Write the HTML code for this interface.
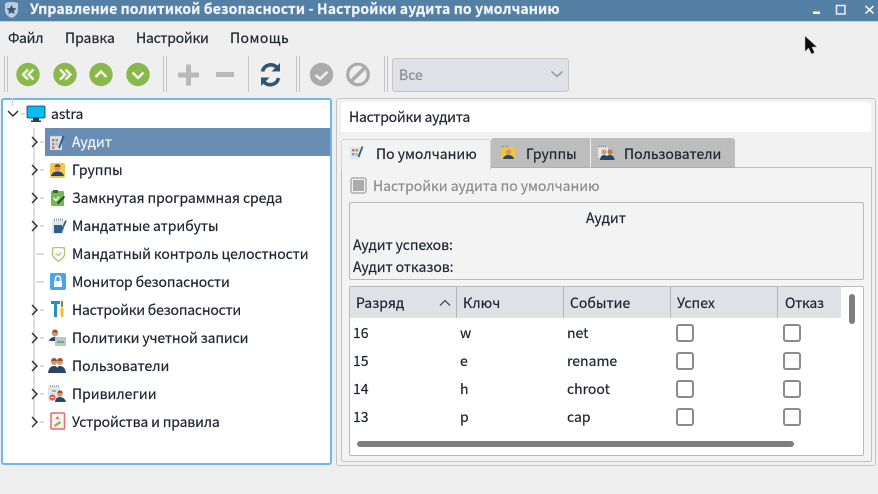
<!DOCTYPE html>
<html lang="ru"><head><meta charset="utf-8"><style>
html,body{margin:0;padding:0}
body{width:878px;height:494px;position:relative;overflow:hidden;background:#efefef;font-family:"Noto Sans CJK SC","Liberation Sans",sans-serif;font-size:14px;color:#1c2530;-webkit-text-stroke:.2px}
.a{position:absolute}
.t{position:absolute;white-space:nowrap;line-height:20px;height:20px}
svg{position:absolute;overflow:visible}
.sep{position:absolute;top:56px;height:36px;width:2px;border-left:1px solid #c4c4c4;border-right:1px solid #c4c4c4}
.sep1{position:absolute;top:56px;height:36px;width:1px;background:#c8c8c8}
.cb{position:absolute;width:14px;height:14px;border:2px solid #8b8b8b;border-radius:3px;background:#fff}
.hd{position:absolute;top:287px;height:31px;background:#e0e1e6;border-right:1px solid #b4b6ba}
</style></head><body>
<!-- title bar -->
<div class="a" style="left:0;top:0;width:878px;height:21px;background:#5580a5;border-bottom:1px solid #c3cfd9"></div>
<svg style="left:3px;top:1px" width="17" height="18" viewBox="0 0 17 18"><path d="M2 2Q8.500 0 15 2V10Q14 15 8.500 17Q3 15 2 10Z" fill="#b9cde0"/><path d="M8.500 4l1.500 3 3.500.5-2.500 2.300.6 3.200-3.100-1.600-3.100 1.600.6-3.200-2.500-2.300 3.500-.5z" fill="#36597c"/></svg>
<div class="t" style="left:30px;top:-1px;color:#f2f5f8;font-weight:700;font-size:14px;letter-spacing:.12px" id="title">Управление политикой безопасности - Настройки аудита по умолчанию</div>
<svg style="left:810px;top:3px" width="68" height="16" viewBox="0 0 68 16"><rect x="3" y="8.500" width="7" height="2.500" fill="#fff"/><rect x="26.500" y="2.500" width="8.500" height="8.500" fill="none" stroke="#e8eef3" stroke-width="1.500"/><path d="M55.500 3l8 7.500M63.500 3l-8 7.500" stroke="#fff" stroke-width="1.500" fill="none"/></svg>
<!-- menu -->
<div class="t" style="left:8px;top:28px;letter-spacing:-.2px">Файл</div>
<div class="t" style="left:65px;top:28px">Правка</div>
<div class="t" style="left:136px;top:28px;letter-spacing:-.25px">Настройки</div>
<div class="t" style="left:230px;top:28px;letter-spacing:.45px">Помощь</div>
<!-- toolbar -->
<div class="sep" style="left:4px"></div>
<div class="sep" style="left:163px"></div>
<div class="sep1" style="left:248px"></div>
<div class="sep" style="left:296px"></div>
<div class="sep" style="left:384px"></div>
<svg style="left:0;top:56px" width="400" height="36" viewBox="0 0 400 36">
<g fill="#8bb84d"><circle cx="28" cy="18.500" r="11.700"/><circle cx="65" cy="18.500" r="11.700"/><circle cx="101" cy="18.500" r="11.700"/><circle cx="138" cy="18.500" r="11.700"/></g>
<g fill="none" stroke="#f2f7e8" stroke-width="2.400"><path d="M28 13.500l-5 5 5 5M33.500 13.500l-5 5 5 5"/><path d="M60 13.500l5 5-5 5M65.500 13.500l5 5-5 5"/><path d="M95.500 21l5.500-5.500 5.500 5.500"/><path d="M132.500 16.500l5.500 5.500 5.500-5.500"/></g>
<path d="M178 19h21M188.500 8.500v21" stroke="#b9b9b9" stroke-width="5" fill="none"/>
<path d="M216 18.500h18" stroke="#b9b9b9" stroke-width="5" fill="none"/>
<g fill="none" stroke="#34556f" stroke-width="3.600"><path d="M262.500 15.500a8.500 8.500 0 0 1 14.500-4"/><path d="M278.500 22a8.500 8.500 0 0 1-14.500 4"/></g>
<path d="M280 7v8.500h-8.500z" fill="#34556f"/><path d="M261 30v-8.500h8.500z" fill="#34556f"/>
<circle cx="321.500" cy="18.500" r="11.700" fill="#ababab"/><path d="M315.500 19l4.500 3.800 7.500-7" stroke="#f1f1f1" stroke-width="2.500" fill="none"/>
<circle cx="358" cy="18.500" r="10.300" fill="none" stroke="#ababab" stroke-width="3.200"/><path d="M351 25.500l14-14" stroke="#ababab" stroke-width="3.600"/>
</svg>
<div class="a" style="left:392px;top:58px;width:175px;height:32px;background:#e0e1e6;border:1px solid #c6c6c6;border-radius:3px"></div>
<div class="t" style="left:399px;top:65px;color:#8a8d92">Все</div>
<svg style="left:550px;top:70px" width="14" height="9" viewBox="0 0 14 9"><path d="M1.500 1.500l5.500 5 5.500-5" fill="none" stroke="#8f9296" stroke-width="1.300"/></svg>
<!-- tree panel -->
<div class="a" style="left:1px;top:98px;width:327px;height:363px;background:#fff;border:2px solid #6cb7eb;border-radius:3px"></div>
<div class="a" style="left:45px;top:128px;width:285px;height:28px;background:#6a8db4"></div>
<svg style="left:0;top:98px" width="50" height="340" viewBox="0 0 50 340">
<g fill="none" stroke="#d0d0d0" stroke-width="1.500"><path d="M12.500 0V8"/><path d="M34 30V324"/><path d="M40 44h4M40 72h4M40 100h4M40 128h4M36 156h8M36 184h8M40 212h4M40 240h4M40 268h4M40 296h4M40 324h4"/><path d="M21 16h4"/></g>
<g fill="none" stroke="#26282b" stroke-width="1.400"><path d="M8 13l5 5 5-5"/><path d="M32 39l5 5-5 5M32 67l5 5-5 5M32 95l5 5-5 5M32 123l5 5-5 5M32 207l5 5-5 5M32 235l5 5-5 5M32 263l5 5-5 5M32 291l5 5-5 5M32 319l5 5-5 5"/></g>
</svg>
<svg style="left:26px;top:105px" width="20" height="18" viewBox="0 0 20 18"><rect x="1" y="1" width="18" height="12" rx="1" fill="#04bdf7" stroke="#234" stroke-width=".8"/><path d="M7 13h6v2.500H7zM5 15.500h10v1.500H5z" fill="#2b3d4f"/></svg>
<div class="t" style="left:51px;top:104px">astra</div>
<!-- tree icons -->
<svg style="left:48px;top:134px" width="18" height="18" viewBox="0 0 18 18"><rect x="2" y="2" width="12" height="14" fill="#d9e2e8"/><path d="M3 1.500h10" stroke="#8a95a0" stroke-dasharray="1 1" stroke-width="2"/><g><rect x="4" y="5" width="2.500" height="2.500" fill="#e16a6a"/><rect x="7.500" y="5" width="2.500" height="2.500" fill="#75b36b"/><rect x="4" y="9" width="2.500" height="2.500" fill="#6c9edb"/><rect x="7.500" y="9" width="2.500" height="2.500" fill="#e6b64b"/><rect x="4" y="12.500" width="2.500" height="2.500" fill="#e16a6a"/></g><path d="M15.500 2L11 14" stroke="#2b5e95" stroke-width="2"/></svg>
<svg style="left:49px;top:162px" width="17" height="17" viewBox="0 0 17 17"><rect x="1" y="1" width="15" height="15" rx="2" fill="#f6c945"/><circle cx="8.500" cy="6" r="3" fill="#d99468"/><path d="M5.500 5a3 3 0 0 1 6 0z" fill="#864c22"/><path d="M2 14q1-4.500 6.500-4.500T15 14z" fill="#26456a"/></svg>
<svg style="left:50px;top:189px" width="16" height="18" viewBox="0 0 16 18"><rect x="1" y="2" width="13" height="15" rx="1" fill="#74b84e"/><path d="M3 1h5v3H3z" fill="#2f6b4a"/><path d="M3.500 9l2.500 2.500 3-4" stroke="#f1f8ea" stroke-width="1.500" fill="none"/><path d="M7.500 14.500l7-7" stroke="#21384c" stroke-width="1.800"/></svg>
<svg style="left:51px;top:218px" width="16" height="17" viewBox="0 0 16 17"><rect x="1" y="2" width="12" height="14" rx="1" fill="#dde7ee"/><rect x="3" y="7" width="8" height="8" fill="#2e5f8f"/><path d="M3 1.500h10" stroke="#8a95a0" stroke-dasharray="1 1" stroke-width="2"/><path d="M15 2.500L10 14" stroke="#2e5f8f" stroke-width="1.800"/></svg>
<svg style="left:51px;top:246px" width="15" height="16" viewBox="0 0 15 16"><path d="M1.500 2Q7.500 1 13.500 2V9Q12 13 7.500 15Q3 13 1.500 9Z" fill="#fff" stroke="#a6c76f" stroke-width="1.300"/><path d="M4.500 7.500l3 2 3-3" stroke="#a6c76f" stroke-width="1.200" fill="none"/></svg>
<svg style="left:50px;top:273px" width="16" height="17" viewBox="0 0 16 17"><rect x="0" y="0" width="16" height="17" rx="2" fill="#4aa3ee"/><rect x="4" y="8" width="8" height="6" fill="#fff"/><path d="M5.500 8V5.500a2.500 2.500 0 0 1 5 0V8" fill="none" stroke="#fff" stroke-width="1.500"/></svg>
<svg style="left:50px;top:300px" width="16" height="18" viewBox="0 0 16 18"><path d="M1 1h9v3H7v13H4V4H1z" fill="#2f88c4"/><path d="M12 1v6" stroke="#555" stroke-width="1.500"/><path d="M10.500 8h3v7.500a1.500 1.500 0 0 1-3 0z" fill="#efc02e"/></svg>
<svg style="left:48px;top:329px" width="18" height="18" viewBox="0 0 18 18"><circle cx="7" cy="4.500" r="3" fill="#d79568"/><path d="M4 3.500a3 3 0 0 1 6 0z" fill="#94562e"/><path d="M1 12q1-4 6-4t5 4z" fill="#28466a"/><rect x="7" y="8" width="11" height="9" fill="#b8c8cd"/><rect x="9" y="12" width="7" height="2" fill="#6fb36b"/></svg>
<svg style="left:48px;top:357px" width="18" height="17" viewBox="0 0 18 17"><circle cx="6" cy="5" r="3" fill="#d79568"/><path d="M3 4a3 3 0 0 1 6 0z" fill="#94562e"/><circle cx="12" cy="5" r="3" fill="#d79568"/><path d="M9 4a3 3 0 0 1 6 0z" fill="#94562e"/><path d="M0 16q1-7 6-7 3 0 3 2 1-2 3-2 5 0 6 7z" fill="#28466a"/></svg>
<svg style="left:48px;top:385px" width="18" height="18" viewBox="0 0 18 18"><rect x="0" y="1" width="12" height="15" fill="#dfe7ec"/><path d="M2 1h9" stroke="#8a95a0" stroke-dasharray="1 1" stroke-width="1.500"/><circle cx="12" cy="9" r="2.700" fill="#d79568"/><path d="M9.300 8a2.700 2.700 0 0 1 5.400 0z" fill="#94562e"/><path d="M7 17q.5-5 5-5t6 5z" fill="#28466a"/><circle cx="4.500" cy="12.500" r="3" fill="#e2574c"/><path d="M3 12.500h3" stroke="#fff"/><path d="M4 6h4" stroke="#70b355" stroke-width="1.500"/></svg>
<svg style="left:50px;top:412px" width="16" height="18" viewBox="0 0 16 18"><rect x="1" y="1" width="13.500" height="16" rx="1" fill="#fff2f2" stroke="#e46b6e" stroke-width="1.500"/><path d="M7.500 4l2 3h-4z" fill="#e46b6e"/><path d="M4.500 14l6-4" stroke="#8bb84d" stroke-width="2.500"/></svg>
<!-- tree text -->
<div class="t" style="left:72px;top:132px;color:#f4f6f9">Аудит</div>
<div class="t" style="left:72px;top:160px">Группы</div>
<div class="t" style="left:72px;top:188px;letter-spacing:-.07px">Замкнутая программная среда</div>
<div class="t" style="left:72px;top:216px;letter-spacing:-.05px">Мандатные атрибуты</div>
<div class="t" style="left:72px;top:244px;letter-spacing:-.07px">Мандатный контроль целостности</div>
<div class="t" style="left:72px;top:272px;letter-spacing:-.15px">Монитор безопасности</div>
<div class="t" style="left:72px;top:300px;letter-spacing:-.22px">Настройки безопасности</div>
<div class="t" style="left:72px;top:328px;letter-spacing:-.13px">Политики учетной записи</div>
<div class="t" style="left:72px;top:356px">Пользователи</div>
<div class="t" style="left:72px;top:384px">Привилегии</div>
<div class="t" style="left:72px;top:412px;letter-spacing:-.15px">Устройства и правила</div>
<!-- right panel -->
<div class="a" style="left:336px;top:98px;width:538px;height:366px;border:1px solid #c4c4c4;border-radius:3px;background:#f1f1f1"></div>
<div class="a" style="left:341px;top:102px;width:530px;height:30px;background:#fff;border-radius:3px"></div>
<div class="t" style="left:349px;top:107px;letter-spacing:-.25px">Настройки аудита</div>
<!-- tab pane -->
<div class="a" style="left:341px;top:167px;width:529px;height:293px;border:1px solid #c0c0c0;background:#f3f3f3;border-radius:0 0 2px 2px"></div>
<div class="a" style="left:491px;top:138px;width:99px;height:29px;background:#bdbdbd;border-radius:3px 0 0 0;border-bottom:1px solid #b0b0b0"></div>
<div class="a" style="left:591px;top:138px;width:144px;height:29px;background:#bdbdbd;border-radius:0 3px 0 0;border-bottom:1px solid #b0b0b0"></div>
<div class="a" style="left:341px;top:139px;width:148px;height:30px;background:#f3f3f3;border:1px solid #d4d4d4;border-bottom:0;border-radius:3px 3px 0 0"></div>
<svg style="left:349px;top:145px" width="15" height="16" viewBox="0 0 15 16"><rect x="1" y="2" width="10" height="12" fill="#dfe7ec"/><rect x="3" y="4" width="2.500" height="2.500" fill="#e16a6a"/><rect x="6.500" y="4" width="2.500" height="2.500" fill="#75b36b"/><rect x="3" y="8" width="2.500" height="2.500" fill="#6c9edb"/><rect x="6.500" y="8" width="2.500" height="2.500" fill="#e6b64b"/><path d="M13.500 1.500L9.500 12" stroke="#2e5f8f" stroke-width="1.800"/></svg>
<svg style="left:500px;top:145px" width="17" height="16" viewBox="0 0 17 16"><rect x="1" y="2" width="14" height="13" fill="#efc53c"/><path d="M1 1.500h7" stroke="#888" stroke-dasharray="1 1" stroke-width="1.500"/><circle cx="8.500" cy="7" r="2.800" fill="#d79568"/><path d="M3 14q1-4 5.500-4t5.500 4z" fill="#28466a"/></svg>
<svg style="left:598px;top:145px" width="18" height="16" viewBox="0 0 18 16"><rect x="0" y="2" width="10" height="11" fill="#dfe7ec"/><path d="M1 1.500h7" stroke="#888" stroke-dasharray="1 1" stroke-width="1.500"/><circle cx="6" cy="7" r="2.500" fill="#d79568"/><circle cx="12" cy="7" r="2.500" fill="#c9764a"/><path d="M2 15q.5-5 4-5 2 0 3 1 1-1 3-1 4 0 4.500 5z" fill="#28466a"/></svg>
<div class="t" style="left:376px;top:144px">По умолчанию</div>
<div class="t" style="left:526px;top:144px">Группы</div>
<div class="t" style="left:624px;top:144px">Пользователи</div>
<!-- checkbox -->
<div class="a" style="left:350px;top:177px;width:13px;height:13px;border:2px solid #bdbdbd;border-radius:3px;background:#f3f3f3"></div>
<div class="a" style="left:353px;top:180px;width:11px;height:11px;background:#ababab"></div>
<div class="t" style="left:373px;top:176px;color:#8c8c8c;letter-spacing:-.03px">Настройки аудита по умолчанию</div>
<!-- group box -->
<div class="a" style="left:349px;top:202px;width:513px;height:76px;border:1px solid #b9b9b9;border-radius:2px;background:#f3f3f3"></div>
<div class="t" style="left:586px;top:208px">Аудит</div>
<div class="t" style="left:353px;top:235px;letter-spacing:-.07px">Аудит успехов:</div>
<div class="t" style="left:353px;top:257px;letter-spacing:-.07px">Аудит отказов:</div>
<!-- table -->
<div class="a" style="left:349px;top:286px;width:513px;height:168px;border:1px solid #b9b9b9;border-radius:2px;background:#fff"></div>
<div class="hd" style="left:350px;width:106px"></div>
<div class="hd" style="left:457px;width:106px"></div>
<div class="hd" style="left:564px;width:106px"></div>
<div class="hd" style="left:671px;width:106px"></div>
<div class="hd" style="left:778px;width:63px;border-right:0"></div>
<div class="t" style="left:356px;top:293px">Разряд</div>
<svg style="left:439px;top:299px" width="12" height="8" viewBox="0 0 12 8"><path d="M1 6.500l5-5 5 5" fill="none" stroke="#4a4d52" stroke-width="1.300"/></svg>
<div class="t" style="left:463px;top:293px">Ключ</div>
<div class="t" style="left:570px;top:293px">Событие</div>
<div class="t" style="left:677px;top:293px">Успех</div>
<div class="t" style="left:785px;top:293px;letter-spacing:-.3px">Отказ</div>
<div class="t" style="left:353px;top:323px">16</div><div class="t" style="left:460px;top:323px">w</div><div class="t" style="left:567px;top:323px">net</div>
<div class="t" style="left:353px;top:351px">15</div><div class="t" style="left:460px;top:351px">e</div><div class="t" style="left:567px;top:351px">rename</div>
<div class="t" style="left:353px;top:379px">14</div><div class="t" style="left:460px;top:379px">h</div><div class="t" style="left:567px;top:379px">chroot</div>
<div class="t" style="left:353px;top:407px">13</div><div class="t" style="left:460px;top:407px">p</div><div class="t" style="left:567px;top:407px">cap</div>
<div class="cb" style="left:676px;top:324px"></div><div class="cb" style="left:783px;top:324px"></div>
<div class="cb" style="left:676px;top:352px"></div><div class="cb" style="left:783px;top:352px"></div>
<div class="cb" style="left:676px;top:380px"></div><div class="cb" style="left:783px;top:380px"></div>
<div class="cb" style="left:676px;top:408px"></div><div class="cb" style="left:783px;top:408px"></div>
<div class="a" style="left:849px;top:294px;width:6px;height:30px;background:#7f7f7f;border-radius:3px"></div>
<div class="a" style="left:357px;top:441px;width:437px;height:6px;background:#7f7f7f;border-radius:3px"></div>
<!-- cursor -->
<svg style="left:804px;top:35px" width="14" height="20" viewBox="0 0 14 20"><path d="M1 1v15.500l3.500-3.500L7.500 19l3-1.400L8 12h5z" fill="#0b0b0b" stroke="#bdbdbd" stroke-width=".5"/></svg>
</body></html>
